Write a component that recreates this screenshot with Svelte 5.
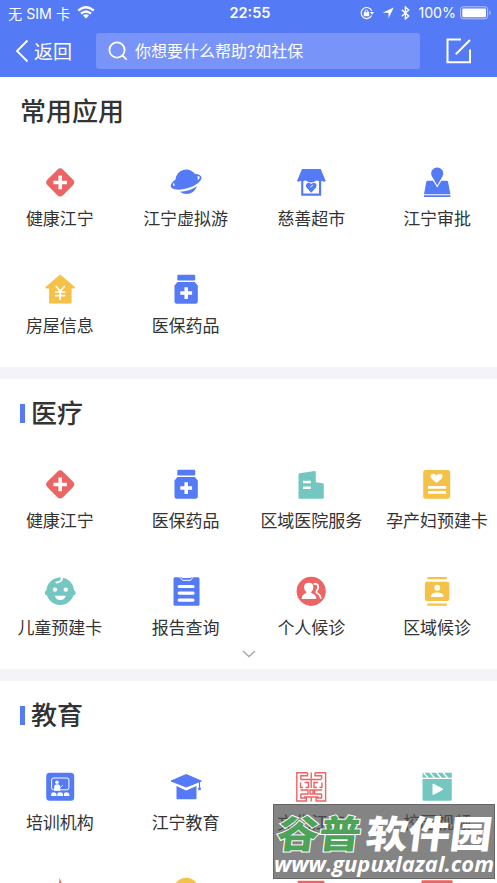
<script lang="ts">
	type App = { icon: string; name: string };
	type Section = { title: string; marked: boolean; more: boolean; apps: App[] };

	const RED = '#ec6463';
	const BLUE = '#557af6';
	const TEAL = '#74c7c0';
	const YELLOW = '#f6c147';

	const sections: Section[] = [
		{
			title: '常用应用',
			marked: false,
			more: false,
			apps: [
				{ icon: 'health', name: '健康江宁' },
				{ icon: 'planet', name: '江宁虚拟游' },
				{ icon: 'market', name: '慈善超市' },
				{ icon: 'approve', name: '江宁审批' },
				{ icon: 'house', name: '房屋信息' },
				{ icon: 'medicine', name: '医保药品' }
			]
		},
		{
			title: '医疗',
			marked: true,
			more: true,
			apps: [
				{ icon: 'health', name: '健康江宁' },
				{ icon: 'medicine', name: '医保药品' },
				{ icon: 'hospital', name: '区域医院服务' },
				{ icon: 'card', name: '孕产妇预建卡' },
				{ icon: 'baby', name: '儿童预建卡' },
				{ icon: 'report', name: '报告查询' },
				{ icon: 'people', name: '个人候诊' },
				{ icon: 'contact', name: '区域候诊' }
			]
		},
		{
			title: '教育',
			marked: true,
			more: false,
			apps: [
				{ icon: 'training', name: '培训机构' },
				{ icon: 'cap', name: '江宁教育' },
				{ icon: 'seal', name: '文化江宁' },
				{ icon: 'video', name: '校园视频' },
				{ icon: 'star', name: '' },
				{ icon: 'sun', name: '' },
				{ icon: 'book', name: '' },
				{ icon: 'board', name: '' }
			]
		}
	];
</script>

{#snippet glyph(icon: string)}
	<svg class="glyph" viewBox="0 0 32 32" aria-hidden="true">
		{#if icon === 'health'}
			<rect x="5.2" y="5.4" width="22" height="22" rx="4" transform="rotate(45 16.2 16.4)" fill={RED} />
			<path d="M9.4 16.4h13.6M16.2 9.6v13.6" stroke="#fff" stroke-width="3.5" />
		{:else if icon === 'planet'}
			<path d="M5.5 14.500A10.800 10.800 0 0 1 26.200 10Z" fill={BLUE} />
			<ellipse cx="16.100" cy="15.800" rx="16" ry="6.600" transform="rotate(-17 16.100 15.800)" fill={BLUE} />
			<path d="M3.600 16.800Q1.800 19.600 4.800 20.300Q4.600 18 3.600 16.800ZM27.600 10Q30.800 10.200 29.300 12.500Q28.800 13.500 27.800 14Z" fill="#fff" />
			<path d="M9.800 25.800Q19 25.500 27 20.300Q23.800 28 16.800 28Q12.800 28 9.800 25.800" fill={BLUE} />
		{:else if icon === 'market'}
			<path d="M7 3h18.700l5 12q-1.500 1.300-3.200 0H5Q3.200 16.300 2 15ZM6.200 14h20v15.700h-20Z" fill={BLUE} />
			<path d="M8.300 15.500q2-2 4 0 3.700 2 7.600 0 2-2 4.100 0v12H8.300Z" fill="#fff" />
			<path d="M16.200 26.700L11.500 21.500Q10 19 12 17.200Q14.500 15.800 16.200 18.300Q18 15.800 20.600 17.200Q22.500 19 21 21.500Z" fill={BLUE} />
			<path d="M15.200 21.200l3-2.200" stroke="#fff" stroke-width=".9" />
		{:else if icon === 'approve'}
			<path d="M6.500 14.700h19.300q1 0 1.200 1l2.400 12.600H3l2.300-12.600q.2-1 1.200-1ZM3 29.300h26.400v1.800H3Z" fill={BLUE} />
			<path d="M16.200 21.500L10.400 12Q7.500 4.500 16.200 .5Q25 4.500 22 12Z" fill="#fff" />
			<path d="M16.200 19.600L10.900 10.200A6 6 0 1 1 21.500 10.200Z" fill={BLUE} />
		{:else if icon === 'house'}
			<path d="M16.200 2.700L30 14.500H26.700V29.700H6V14.500H2.400Z" fill={YELLOW} stroke={YELLOW} stroke-width="1.800" stroke-linejoin="round" />
			<path d="M12.300 13.500L16.200 18.300L20.200 13.500M16.200 18v8.300M11.800 19h8.800M11.800 22.600h8.800" fill="none" stroke="#fff" stroke-width="1.700" stroke-linecap="round" />
		{:else if icon === 'medicine'}
			<rect x="7.300" y="1.700" width="17.900" height="5.700" rx="1.200" fill={BLUE} />
			<path d="M7.500 9h17.300l3 3.500V28.500q0 2.200-2.200 2.200H6.700q-2.200 0-2.200-2.200V12.500Z" fill={BLUE} />
			<path d="M10.300 20.100h11.800M16.200 14.200v11.800" stroke="#fff" stroke-width="3.500" />
		{:else if icon === 'hospital'}
			<path d="M3.500 6.500q0-1 1-1.200L19.800 3q1 0 1 1v10.300l7 1q1 .2 1 1.200v13.200q0 1-1 1H4.500q-1 0-1-1Z" fill={TEAL} />
			<path d="M8 14h7.800M8 19.700h7.800" stroke="#fff" stroke-width="2.400" />
		{:else if icon === 'card'}
			<rect x="2.200" y="2" width="27" height="28.700" rx="2.500" fill={YELLOW} />
			<path d="M15.600 15L10.300 10.500Q8.600 7.500 10.800 6Q13.500 4.900 15.600 7.500Q17.800 4.900 20.500 6Q22.600 7.500 20.900 10.500Z" fill="#fff" />
			<path d="M7 19.300h18.200M7 24.400h18.200" stroke="#fff" stroke-width="2.800" />
		{:else if icon === 'baby'}
			<circle cx="16.200" cy="16.200" r="13.800" fill={TEAL} />
			<circle cx="3.400" cy="17.800" r="2.600" fill={TEAL} />
			<circle cx="29" cy="17.800" r="2.600" fill={TEAL} />
			<path d="M18 2q.5 5-5.500 5.500" fill="none" stroke="#fff" stroke-width="2" stroke-linecap="round" />
			<circle cx="11" cy="14.600" r="2.200" fill="#fff" />
			<circle cx="21.800" cy="14.600" r="2.200" fill="#fff" />
			<path d="M10.800 20.800h11q-1.200 4.200-5.500 4.200t-5.500-4.200Z" fill="#fff" />
		{:else if icon === 'report'}
			<rect x="3.500" y="2.300" width="26" height="28.400" rx="1.500" fill={BLUE} />
			<path d="M10 2.300l2.500 3h8l2.500-3" fill="none" stroke="#fff" stroke-width="1" />
			<path d="M12 2.500h9" stroke="#fff" stroke-width="1" />
			<path d="M9.200 11.500h13.800M9.200 18.200h13.800M9.200 25.100h13.800" stroke="#fff" stroke-width="3.200" stroke-linecap="round" />
		{:else if icon === 'people'}
			<circle cx="16.200" cy="16.300" r="14.600" fill={RED} />
			<path d="M18.500 9.200q2.500-1.200 4.200.8 1.500 3-1.200 6v1.700q4 1.800 4.300 6" fill="none" stroke="#fff" stroke-width="1.800" />
			<path d="M13.700 7.800q4.700 0 4.700 4.400 0 3-2.200 4.700v1.200q5.200 1.500 5.200 6H6.700q0-4.500 4.600-6v-1.200Q9 15 9 12.200q0-4.400 4.700-4.400Z" fill="#fff" />
		{:else if icon === 'contact'}
			<path d="M6.400 2h19.400v2.300H6.400ZM6.400 28.400h19.400v2.300H6.400Z" fill={YELLOW} />
			<rect x="3.900" y="6.700" width="24.400" height="19.400" rx="2" fill={YELLOW} />
			<circle cx="16.200" cy="12.800" r="3" fill="#fff" />
			<path d="M9.900 22v-1.500q1-3 6.300-3t6.300 3V22Z" fill="#fff" />
		{:else if icon === 'training'}
			<rect x="2.200" y="2.700" width="28" height="28" rx="3.500" fill={BLUE} />
			<rect x="7.600" y="8" width="17.300" height="11.800" rx="2" fill="none" stroke="#fff" />
			<circle cx="13" cy="12.200" r="1.700" fill="#fff" />
			<path d="M10.200 20.700v-4q0-2.500 3-2.500t3 2.500v4Z" fill="#fff" />
			<path d="M15.500 18.500l3.500-3.500" stroke="#fff" stroke-width=".8" />
			<path d="M7.200 26v-2q0-1.800 2.300-1.800T12.500 24v2ZM13.300 26v-2q0-1.800 2.800-1.800T19 24v2ZM19.900 26v-2q0-1.800 2.500-1.800T25.300 24v2Z" fill="#fff" />
		{:else if icon === 'cap'}
			<path d="M6.500 15.500L16.200 20.300L26.500 15.500V28.300q0 1-1 1h-18q-1 0-1-1Z" fill={BLUE} />
			<path d="M6 14.500L16.200 19.400L27 14.500" fill="none" stroke="#fff" stroke-width="2" />
			<path d="M1 11L16.200 4.500L31.300 11L16.200 17Z" fill={BLUE} stroke={BLUE} stroke-linejoin="round" />
			<path d="M29.500 11v8" stroke={BLUE} stroke-width="1.200" />
			<circle cx="29.500" cy="18.700" r="1.500" fill={BLUE} />
		{:else if icon === 'seal'}
			<path
				d="M12.500 2.800H1.800V31h9.500v-3H5.800v-3.500M20 2.800H30.600V31h-9.500v-3h5.500v-3.500M16.200 2.500v6M12.500 2.800v3H5.800V9M20 2.800v3h6.600V9M5.500 9.500h21M5.500 12.500v5H8M26.900 12.500v5h-2.500M9.500 12.500h4v5h-3M23 12.500h-4v5h3M16.200 10v8M5.500 20h7.500v4H5.500M27 20h-7.500v4H27M15 20h3v4h-3ZM9 27h14.500M16.200 27v4.500"
				fill="none"
				stroke={RED}
				stroke-width="1.400"
			/>
		{:else if icon === 'video'}
			<path d="M1.500 2.800h29.300v5H1.500ZM1.500 9h29.300v20.300q0 1.500-1.500 1.500H3q-1.500 0-1.500-1.500Z" fill={TEAL} />
			<path d="M2.500 2.500l5 6M9 2.500l5 6M15.500 2.500l5 6M22 2.500l5 6" stroke="#fff" stroke-width="1.200" />
			<path d="M12 14L22 19.300L12 24.600Z" fill="#fff" stroke="#fff" stroke-linejoin="round" />
		{:else if icon === 'star'}
			<path d="M15.500 1L20 12H31L22 19L25 30L16.200 23L7 30L10 19L1 12H14.500Z" fill={RED} />
		{:else if icon === 'sun'}
			<circle cx="16.200" cy="14" r="13.200" fill={YELLOW} />
		{:else if icon === 'book'}
			<rect x="2.500" y="3.800" width="27" height="26" rx="1" fill={RED} />
		{:else if icon === 'board'}
			<rect x=".5" y="3.300" width="31" height="26" rx="1" fill={RED} />
		{/if}
	</svg>
{/snippet}

<div class="page">
	<header>
		<div class="status">
			<div class="carrier">
				<span>无 SIM 卡</span>
				<svg width="18" height="13" viewBox="0 0 18 13" aria-hidden="true">
					<path d="M1.200 4.700Q9-2.300 16.800 4.700M4 7.700Q9 3.300 14 7.700" fill="none" stroke="#fff" stroke-width="2.300" />
					<path d="M6 9.500Q9 7.200 12 9.500L9 12.600Z" fill="#fff" />
				</svg>
			</div>
			<strong>22:55</strong>
			<div class="signals">
				<svg width="14" height="14" viewBox="0 0 14 14" aria-hidden="true">
					<path d="M11.600 9.500A5.500 5.500 0 1 1 11.800 5" fill="none" stroke="#fff" stroke-width="1.200" />
					<path d="M10 6h4l-2 2.800ZM3.800 6.200h5.400v4H3.800Z" fill="#fff" />
					<path d="M5 6.500V5q1.500-2 3 0v1.500" fill="none" stroke="#fff" />
				</svg>
				<svg class="arrow" width="12" height="12" viewBox="0 0 12 12" aria-hidden="true">
					<path d="M11.700.5L6.500 11.500V5.800H.5Z" fill="#fff" />
				</svg>
				<svg class="bluetooth" width="9" height="14" viewBox="0 0 9 14" aria-hidden="true">
					<path d="M.8 3.700L7.700 10L4.400 13V1L7.700 4L.8 10.300" fill="none" stroke="#fff" stroke-width="1.400" />
				</svg>
				<span>100%</span>
				<svg width="32" height="14" viewBox="0 0 32 14" aria-hidden="true">
					<rect x=".6" y=".8" width="27" height="12" rx="2.500" fill="none" stroke="#b5c4fb" />
					<rect x="2.300" y="2.400" width="23.700" height="8.800" rx="1" fill="#fff" />
					<path d="M29.300 4.500q3 2.300 0 4.600Z" fill="#b5c4fb" />
				</svg>
			</div>
		</div>
		<div class="bar">
			<button class="back" aria-label="返回">
				<svg width="14" height="24" viewBox="0 0 14 24" aria-hidden="true">
					<path d="M12.500 1.500L2 12L12.500 22.500" fill="none" stroke="#fff" stroke-width="1.900" />
				</svg>
				<span>返回</span>
			</button>
			<div class="search">
				<svg width="20" height="20" viewBox="0 0 20 20" aria-hidden="true">
					<circle cx="9" cy="9" r="7.600" fill="none" stroke="#fff" stroke-width="1.800" />
					<path d="M14.300 14.300L18.700 18.700" stroke="#fff" stroke-width="1.900" />
				</svg>
				<span>你想要什么帮助?如社保</span>
			</div>
			<button class="edit" aria-label="edit">
				<svg width="26" height="26" viewBox="0 0 26 26" aria-hidden="true">
					<path d="M15 1.500H1.500V24.200H24V11.500M9.800 16.200L24 2" fill="none" stroke="#fff" stroke-width="2" />
				</svg>
			</button>
		</div>
	</header>

	{#each sections as section}
		<section>
			<h2 class:marked={section.marked}><span>{section.title}</span></h2>
			<div class="grid">
				{#each section.apps as app}
					<div class="app">
						{@render glyph(app.icon)}
						<span>{app.name}</span>
					</div>
				{/each}
			</div>
			<div class="foot">
				{#if section.more}
					<svg width="14" height="8" viewBox="0 0 14 8" aria-hidden="true">
						<path d="M1 1L7 6.500L13 1" fill="none" stroke="#a5a5a5" stroke-width="1.300" />
					</svg>
				{/if}
			</div>
		</section>
	{/each}

	<svg class="watermark" width="222" height="75" viewBox="0 0 222 75">
		<rect x=".5" y=".5" width="221" height="74" />
		<g class="brand" transform="translate(6 0) skewX(-7)">
			<text class="green" x="2" y="44" textLength="84" lengthAdjust="spacingAndGlyphs">谷普</text>
			<text x="91" y="44" textLength="126" lengthAdjust="spacingAndGlyphs">软件园</text>
		</g>
		<text class="url" x="1" y="68" textLength="220" lengthAdjust="spacingAndGlyphs">www.gupuxlazal.com</text>
	</svg>
</div>

<style>
	:global(body) {
		overflow: hidden;
	}
	.page {
		position: relative;
		height: 883px;
		overflow: hidden;
		background: #f3f3f8;
		color: #333;
		font-family: Inter, 'Noto Sans CJK SC', sans-serif;
	}
	header {
		height: 77px;
		background: #557af6;
		color: #fff;
	}
	.status {
		display: grid;
		grid-template-columns: 1fr auto 1fr;
		align-items: center;
		height: 25px;
		padding: 0 5px 0 8px;
		font-size: 14.2px;
	}
	.status strong {
		font-weight: 600;
		font-size: 14.5px;
	}
	.carrier,
	.signals {
		display: flex;
		align-items: center;
	}
	.carrier {
		gap: 7px;
	}
	.signals {
		justify-content: flex-end;
	}
	.arrow {
		margin-left: 8px;
	}
	.bluetooth {
		margin: 0 8px 0 7px;
	}
	.signals span {
		margin-right: 4px;
	}
	.bar {
		display: flex;
		align-items: center;
		height: 52px;
		padding: 0 25px 0 15px;
	}
	button {
		display: flex;
		align-items: center;
		padding: 0;
		border: none;
		background: none;
		color: #fff;
		font: inherit;
	}
	.back {
		width: 81px;
		gap: 5px;
		font-size: 19px;
	}
	.back span,
	.search span {
		padding-bottom: 2px;
	}
	.search {
		display: flex;
		align-items: center;
		gap: 7px;
		width: 324px;
		height: 36px;
		padding-left: 12px;
		box-sizing: border-box;
		border-radius: 3px;
		background: #7894f8;
		font-size: 16px;
	}
	.edit {
		margin-left: auto;
	}
	section {
		height: 290px;
		margin-bottom: 12px;
		background: #fff;
	}
	h2 {
		display: flex;
		align-items: center;
		height: 68px;
		margin: 0 0 21px;
		padding-left: 20px;
		font-size: 26px;
		font-weight: 500;
	}
	h2 span {
		padding-bottom: 4px;
	}
	.marked::before {
		content: '';
		width: 5px;
		height: 19px;
		margin-right: 6px;
		background: #557af6;
	}
	.grid {
		display: grid;
		grid-template-columns: repeat(4, 1fr);
		row-gap: 43px;
		margin: 0 -3px;
	}
	.app {
		display: flex;
		flex-direction: column;
		align-items: center;
		height: 64px;
		gap: 9px;
		font-size: 17px;
		line-height: 24px;
		white-space: nowrap;
	}
	.glyph {
		flex-shrink: 0;
		width: 32px;
		height: 32px;
	}
	.foot {
		display: flex;
		align-items: center;
		justify-content: center;
		height: 30px;
	}
	.watermark {
		position: absolute;
		left: 272.5px;
		top: 804px;
	}
	.watermark rect {
		fill: rgba(80, 80, 80, 0.7);
		stroke: #666;
	}
	.watermark text {
		fill: #fff;
	}
	.brand text {
		font: 900 38px 'Noto Sans CJK SC', sans-serif;
	}
	.brand .green {
		fill: #4da35a;
		stroke: #fff;
		stroke-width: 2px;
		paint-order: stroke;
	}
	.watermark .url {
		font: italic 700 22px 'Open Sans', sans-serif;
	}
</style>
